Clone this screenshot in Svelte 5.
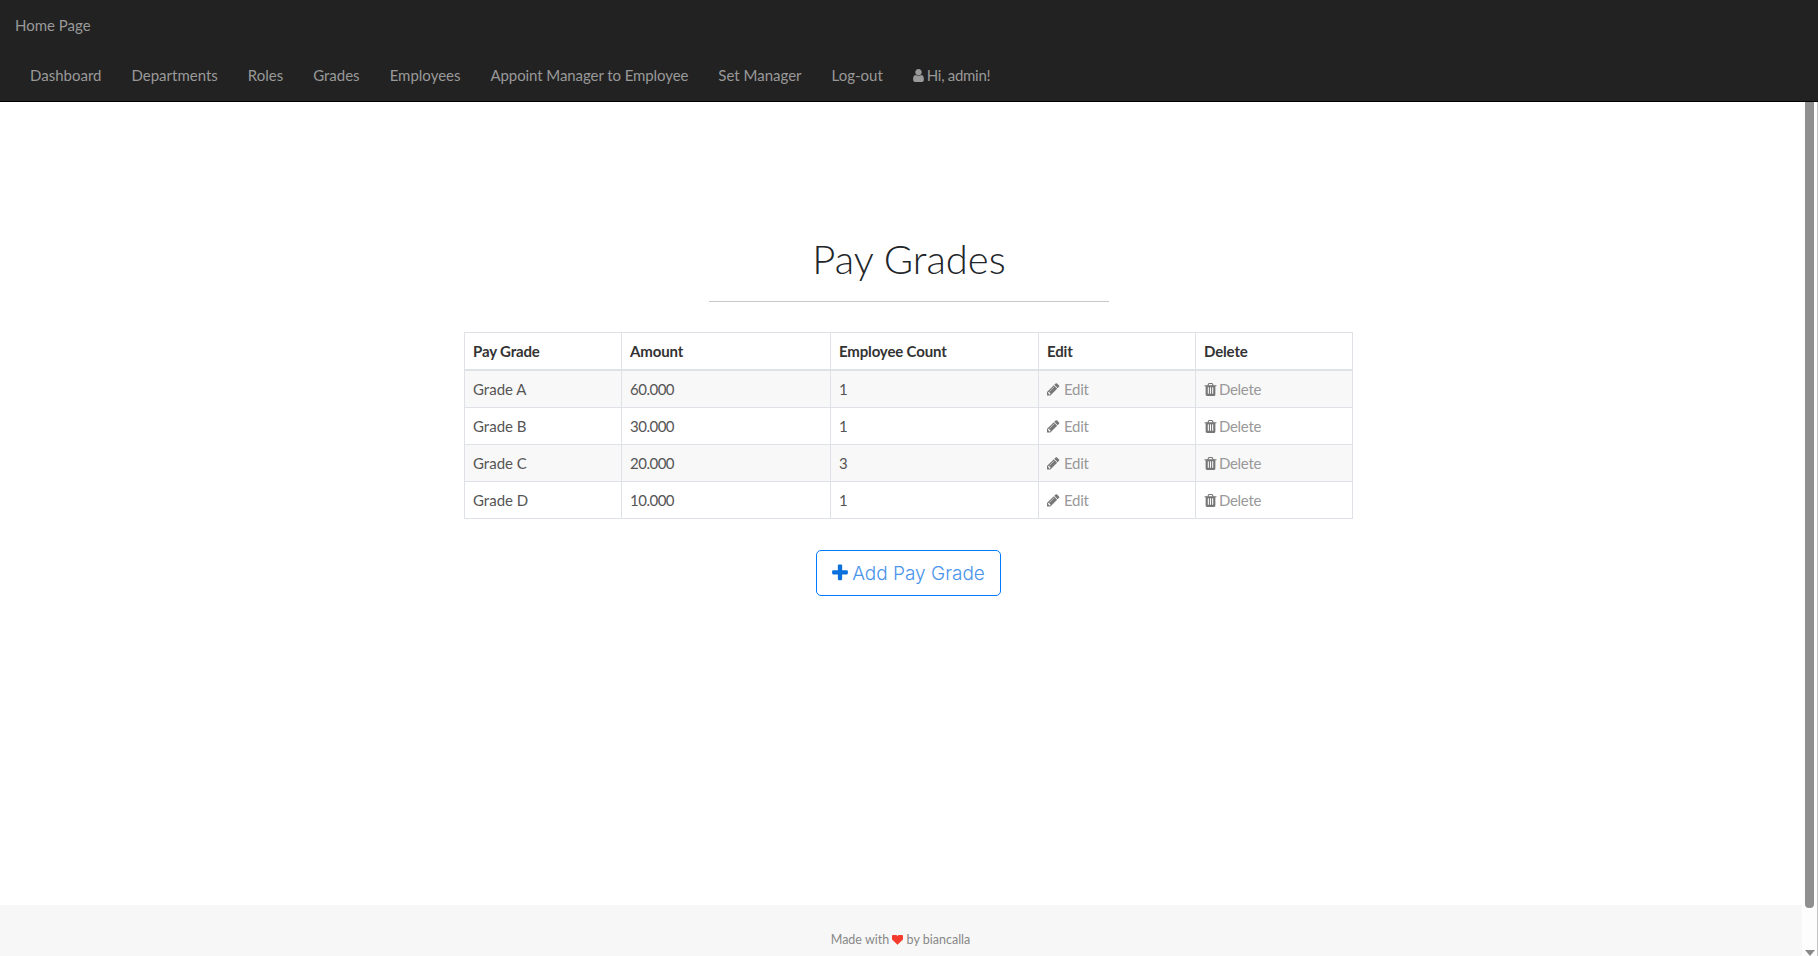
<script>
  const links = ['Dashboard', 'Departments', 'Roles', 'Grades', 'Employees', 'Appoint Manager to Employee', 'Set Manager', 'Log-out'];
  const rows = [
    ['Grade A', '60.000', '1'],
    ['Grade B', '30.000', '1'],
    ['Grade C', '20.000', '3'],
    ['Grade D', '10.000', '1']
  ];
  const pencil = 'M491 1536l91-91-235-235-91 91v107h128v128h107zm523-928q0-22-22-22-10 0-17 7l-542 542q-7 7-7 17 0 22 22 22 10 0 17-7l542-542q7-7 7-17zm-54-192l416 416-832 832h-416v-416zm683 96q0 53-37 90l-166 166-416-416 166-165q36-38 90-38 53 0 91 38l235 234q37 39 37 91z';
  const trash = 'M704 1376v-704q0-14-9-23t-23-9h-64q-14 0-23 9t-9 23v704q0 14 9 23t23 9h64q14 0 23-9t9-23zm256 0v-704q0-14-9-23t-23-9h-64q-14 0-23 9t-9 23v704q0 14 9 23t23 9h64q14 0 23-9t9-23zm256 0v-704q0-14-9-23t-23-9h-64q-14 0-23 9t-9 23v704q0 14 9 23t23 9h64q14 0 23-9t9-23zm-544-992h448l-48-117q-7-9-17-11h-317q-10 2-17 11zm928 32v64q0 14-9 23t-23 9h-96v948q0 83-47 143.5t-113 60.5h-832q-66 0-113-58.5t-47-141.5v-952h-96q-14 0-23-9t-9-23v-64q0-14 9-23t23-9h309l70-167q15-37 54-63t79-26h320q40 0 79 26t54 63l70 167h309q14 0 23 9t9 23z';
</script>

<div class="page">
  <nav class="navbar">
    <a class="brand" href="#home">Home Page</a>
    <ul class="links">
      {#each links as l}
        <li><a href="#x" class:long={l.length > 20}>{l}</a></li>
      {/each}
      <li>
        <a href="#x" class="user"><svg class="i-user" viewBox="256 128 1280 1536" aria-hidden="true"><path d="M1536 1399q0 109-62.5 187t-150.5 78h-854q-88 0-150.5-78t-62.5-187q0-85 8.5-160.5t31.5-152 58.5-131 94-89 134.5-34.5q131 128 313 128t313-128q76 0 134.5 34.5t94 89 58.5 131 31.5 152 8.5 160.5zm-256-887q0 159-112.5 271.5t-271.5 112.5-271.5-112.5-112.5-271.5 112.5-271.5 271.5-112.5 271.5 112.5 112.5 271.5z"/></svg> Hi, admin!</a>
      </li>
    </ul>
  </nav>

  <main>
    <h1>Pay Grades</h1>
    <hr />
    <table>
      <colgroup>
        <col style="width:157px" /><col style="width:209px" /><col style="width:208px" /><col style="width:157px" /><col style="width:157px" />
      </colgroup>
      <thead>
        <tr><th>Pay Grade</th><th>Amount</th><th>Employee Count</th><th>Edit</th><th>Delete</th></tr>
      </thead>
      <tbody>
        {#each rows as r}
          <tr>
            <td>{r[0]}</td>
            <td class="num">{r[1]}</td>
            <td class="num">{r[2]}</td>
            <td><a href="#e" class="act"><svg class="i-pencil" viewBox="128 128 1600 1600" aria-hidden="true"><path d={pencil} /></svg> Edit</a></td>
            <td><a href="#d" class="act del"><svg class="i-trash" viewBox="128 128 1536 1536" aria-hidden="true"><path d={trash} /></svg> Delete</a></td>
          </tr>
        {/each}
      </tbody>
    </table>
    <a class="btn" href="#add"><svg class="plus" viewBox="0 0 1792 1792" aria-hidden="true"><path d="M1600 736v192q0 40-28 68t-68 28h-416v416q0 40-28 68t-68 28h-192q-40 0-68-28t-28-68v-416h-416q-40 0-68-28t-28-68v-192q0-40 28-68t68-28h416v-416q0-40 28-68t68-28h192q40 0 68 28t28 68v416h416q40 0 68 28t28 68z"/></svg> Add Pay Grade</a>
  </main>

  <footer>
    <span>Made with <svg class="heart" viewBox="64 256 1664 1408" aria-hidden="true"><path d="M896 1664q-26 0-44-18l-624-602q-10-8-27.5-26t-55.5-65.5-68-97.5-53.5-121-23.5-138q0-220 127-344t351-124q62 0 126.5 21.5t120 58 95.5 68.5 76 68q36-36 76-68t95.5-68.5 120-58 126.5-21.5q224 0 351 124t127 344q0 221-229 450l-623 600q-18 18-44 18z"/></svg> by biancalla</span>
  </footer>

  <div class="scrollbar" aria-hidden="true">
    <div class="thumb"></div>
    <div class="arrow"></div>
  </div>
</div>

<style>
  :global(body) {
    margin: 0;
    background: #fff;
    font-family: "Lato", "Open Sans", sans-serif;
    font-size: 15px;
    color: #212529;
    overflow: hidden;
  }
  a { text-decoration: none; }
  .page {
    position: relative;
    display: flex;
    flex-direction: column;
    height: 956px;
    overflow: hidden;
  }
  .navbar {
    height: 101px;
    flex: none;
    background: #222;
    border-bottom: 1px solid #000;
    display: flex;
    flex-direction: column;
    color: #999;
  }
  .brand {
    color: #999;
    padding: 15px 15px 0;
    line-height: 20px;
  }
  .links {
    list-style: none;
    margin: 0;
    padding: 30px 15px 0 30px;
    display: flex;
    gap: 30px;
  }
  .links a {
    color: #999;
    line-height: 20px;
    white-space: nowrap;
  }
  .links a.long { letter-spacing: -0.085px; }
  .links a.user { display: inline-flex; align-items: center; gap: 3px; letter-spacing: -0.3px; }
  svg { fill: currentColor; flex: none; }
  .i-user { width: 11px; height: 13px; }
  .i-pencil { width: 13px; height: 13px; }
  .i-trash { width: 13px; height: 13px; }
  main {
    flex: 1;
    display: flex;
    flex-direction: column;
    align-items: center;
  }
  h1 {
    font-weight: 300;
    font-size: 40px;
    line-height: 44px;
    margin: 135px 0 0;
    color: #212529;
  }
  hr {
    width: 400px;
    height: 0;
    border: 0;
    border-top: 1px solid #c8c8c8;
    margin: 20px 0 30px;
  }
  table {
    width: 889px;
    margin-right: 1px;
    table-layout: fixed;
    border-collapse: collapse;
    line-height: 20px;
  }
  th, td {
    border: 1px solid #dee2e6;
    padding: 8px;
    text-align: left;
    height: 20px;
  }
  th { font-weight: 700; border-bottom-width: 2px; color: #333; letter-spacing: -0.15px; }
  td { color: #555; }
  td.num { letter-spacing: -0.5px; }
  tbody tr:nth-child(odd) { background: #f8f8f8; }
  .act { color: #999; display: inline-flex; align-items: center; gap: 4px; height: 20px; vertical-align: top; letter-spacing: -0.3px; }
  .act.del { gap: 2px; }
  .act svg { color: #777; }
  .btn {
    margin-top: 31px;
    margin-right: 1px;
    height: 44px;
    width: 181px;
    padding-right: 2px;
    border: 1px solid #007bff;
    border-radius: 5px;
    color: #4a94ea;
    font-family: "Inter", sans-serif;
    font-weight: 300;
    font-size: 19px;
    display: flex;
    align-items: center;
    justify-content: center;
    gap: 2px;
  }
  .plus { width: 20px; height: 20px; fill: #0a70dc; }
  footer {
    flex: none;
    height: 51px;
    background: #f7f7f7;
    display: flex;
    justify-content: center;
    padding-top: 27px;
    padding-right: 17px;
    box-sizing: border-box;
    font-size: 12.5px;
    color: #888;
    line-height: 16px;
  }
  .heart { width: 11px; height: 10px; fill: #f53b2d; vertical-align: -1px; }
  .scrollbar {
    position: absolute;
    top: 102px;
    bottom: 0;
    right: 0;
    width: 16px;
    background: #fdfdfd;
    border-right: 1px solid #c4c4c4;
    box-sizing: border-box;
  }
  .thumb {
    position: absolute;
    left: 3px;
    width: 9px;
    top: 0;
    height: 806px;
    background: #8f8f8f;
    border-radius: 0 0 4px 4px;
  }
  .arrow {
    position: absolute;
    left: 3px;
    bottom: 0;
    width: 0;
    height: 0;
    border-left: 5px solid transparent;
    border-right: 5px solid transparent;
    border-top: 6px solid #8a8a8a;
  }
</style>
